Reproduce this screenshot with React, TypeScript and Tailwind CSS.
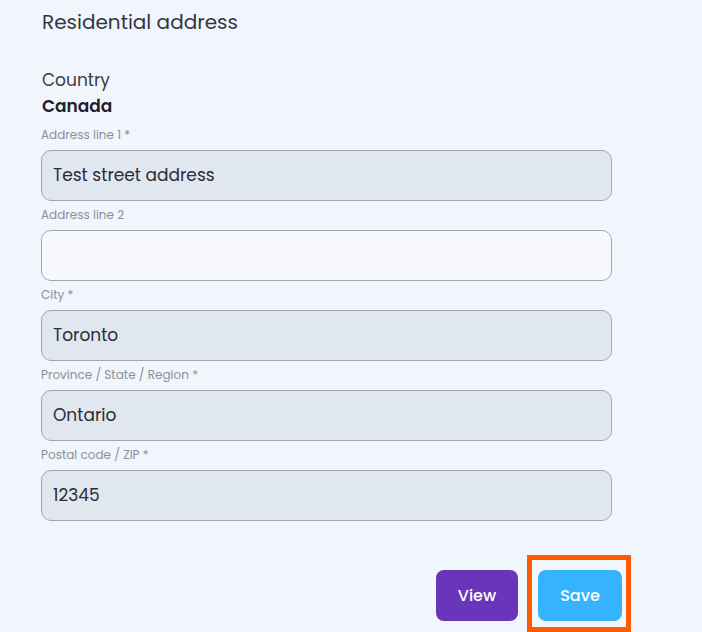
const fields = [
  { label: 'Address line 1 *', value: 'Test street address' },
  { label: 'Address line 2', value: '' },
  { label: 'City *', value: 'Toronto' },
  { label: 'Province / State / Region *', value: 'Ontario' },
  { label: 'Postal code / ZIP *', value: '12345' },
]

function Field({ label, value }: { label: string; value: string }) {
  const filled = value !== ''
  return (
    <div className="flex flex-col">
      <label className="text-[12px] leading-4 text-[#8d9099] mb-[7px]">{label}</label>
      <div
        className={`h-[51px] w-[571px] flex items-center px-[11px] rounded-[10px] border border-[#a3a5b1] text-[17px] text-[#2b2c38] ${
          filled ? 'bg-[#e1e7ee]' : 'bg-[#f8f9fe]'
        }`}
      >
        {value}
      </div>
    </div>
  )
}

export default function App() {
  return (
    <div
      className="w-[702px] h-[632px] overflow-hidden bg-[#f1f5fc] pl-[41px] pt-[8px]"
      style={{ fontFamily: '"Poppins", "Open Sans", sans-serif' }}
    >
      <h2 className="text-[20px] leading-7 text-[#34353f] pl-[1px]">Residential address</h2>

      <div className="mt-[32px] pl-[1px]">
        <div className="text-[17px] leading-6 text-[#3a3b45]">Country</div>
        <div className="text-[17px] leading-6 font-semibold text-[#1f2029] mt-[2px]">Canada</div>
      </div>

      <div className="mt-[9px] flex flex-col gap-[6px]">
        {fields.map((f) => (
          <Field key={f.label} label={f.label} value={f.value} />
        ))}
      </div>

      <div className="mt-[49px] flex justify-end gap-[20px] w-[581px]">
        <button className="w-[82px] h-[51px] rounded-[8px] bg-[#6935ba] text-white text-[16px] font-medium">
          View
        </button>
        <div className="relative">
          <span className="absolute -left-[11px] -top-[15px] -right-[9px] -bottom-[11px] border-[5px] border-[#ff5a00] pointer-events-none" />
          <button className="w-[84px] h-[51px] rounded-[8px] bg-[#36b3ff] text-white text-[16px] font-medium">
            Save
          </button>
        </div>
      </div>
    </div>
  )
}
